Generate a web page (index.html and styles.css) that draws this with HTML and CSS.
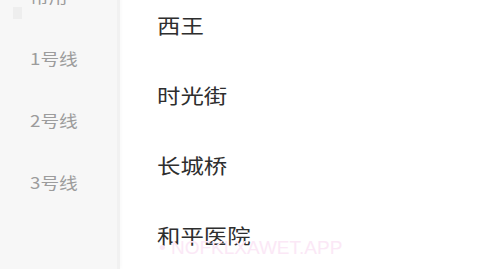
FILE: index.html
```html
<!DOCTYPE html>
<html lang="zh-CN">
<head>
  <meta charset="UTF-8">
  <meta name="viewport" content="width=device-width, initial-scale=1.0">
  <title>线路站点</title>
  <link rel="stylesheet" href="styles.css">
</head>
<body>
  <div class="page">
    <nav class="sidebar">
      <div class="line-item active"><span>常用</span></div>
      <div class="line-item"><span>1号线</span></div>
      <div class="line-item"><span>2号线</span></div>
      <div class="line-item"><span>3号线</span></div>
    </nav>
    <section class="stations">
      <div class="station"><span>西王</span></div>
      <div class="station"><span>时光街</span></div>
      <div class="station"><span>长城桥</span></div>
      <div class="station"><span>和平医院</span></div>
    </section>
  </div>
  <div class="watermark">• NOFKLXAWET.APP</div>
</body>
</html>
```

FILE: styles.css
```css
body {
  margin: 0;
  padding: 0;
  background-color: #fff;
  font-family: "Noto Sans CJK SC", "Noto Sans", sans-serif;
  overflow: hidden;
}
.page {
  display: flex;
  height: 269px;
  overflow: hidden;
}
.sidebar {
  width: 117px;
  flex-shrink: 0;
  background-color: #f7f7f7;
  border-right: 3px solid #f1f1f1;
  box-shadow: 2px 0 3px rgba(0, 0, 0, 0.02);
  margin-top: -35px;
}
.line-item {
  height: 62px;
  line-height: 62px;
  padding-left: 30px;
  font-size: 16px;
  color: #9c9c9c;
  position: relative;
}
.line-item span,
.station span {
  display: inline-block;
  transform: scaleX(1.17);
  transform-origin: left center;
}
.line-item.active::before {
  content: "";
  position: absolute;
  left: 13px;
  top: 42px;
  width: 9px;
  height: 12px;
  background-color: #eeeeee;
}
.stations {
  flex: 1;
  margin-top: -9px;
}
.station {
  height: 70px;
  line-height: 70px;
  padding-left: 157px;
  margin-left: -120px;
  font-size: 20px;
  color: #2e2e2e;
}
.watermark {
  position: absolute;
  left: 159px;
  top: 237px;
  font-family: "Liberation Sans", Arial, sans-serif;
  font-size: 19px;
  color: #fbe8f6;
}
```
